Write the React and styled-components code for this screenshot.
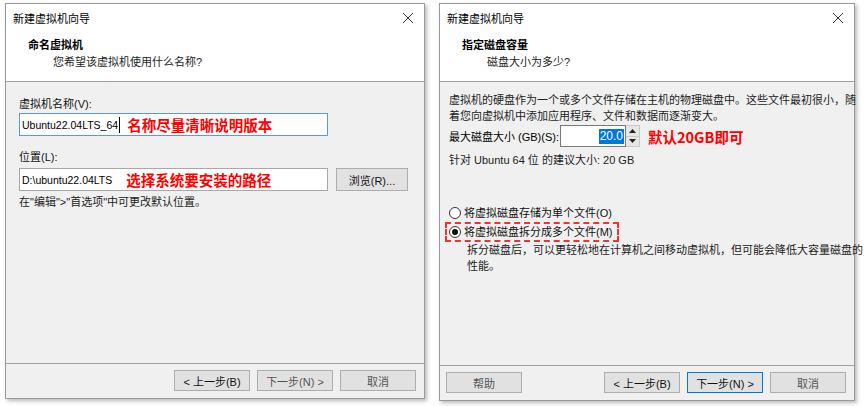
import React from "react";
import styled, { createGlobalStyle } from "styled-components";

const GlobalStyle = createGlobalStyle`
  body {
    margin: 0;
    background: #ffffff;
    font-family: "Liberation Sans", "Noto Sans CJK SC", sans-serif;
    font-size: 11px;
    color: #000;
  }
`;

// Layout
const Page = styled.div`
  display: flex;
  align-items: flex-start;
  gap: 14px;
  padding: 3px 0 0 5px;
  width: 864px;
  height: 406px;
  box-sizing: border-box;
`;

const Dialog = styled.div`
  width: ${(p) => p.$w}px;
  height: ${(p) => p.$h}px;
  box-sizing: border-box;
  display: flex;
  flex-direction: column;
  background: #f0f0f0;
  border: 1px solid #9a9a9a;
  box-shadow: 2px 2px 4px rgba(0, 0, 0, 0.28);
`;

const TitleBar = styled.div`
  height: 27px;
  flex-shrink: 0;
  background: #ffffff;
  display: flex;
  align-items: center;
  justify-content: space-between;
  padding: 0 10px 0 7px;
  font-size: 11px;
  color: #000;
`;

const CloseX = styled.svg`
  width: 12px;
  height: 12px;
`;

const Header = styled.div`
  height: 51px;
  flex-shrink: 0;
  background: #ffffff;
  border-bottom: 1px solid #a0a0a0;
  box-sizing: border-box;
  padding: 6px 0 0 22px;
`;

const HeaderTitle = styled.div`
  font-weight: bold;
  font-size: 11px;
  line-height: 16px;
  color: #000;
`;

const HeaderSub = styled.div`
  font-size: 11px;
  line-height: 16px;
  margin-top: 1px;
  padding-left: 25px;
  color: #222;
`;

const Body = styled.div`
  flex: 1;
  padding: ${(p) => p.$pad};
  display: flex;
  flex-direction: column;
`;

const Footer = styled.div`
  flex-shrink: 0;
  height: 35px;
  border-top: 1px solid #a0a0a0;
  box-sizing: border-box;
  display: flex;
  align-items: center;
  padding: 0 8px 1px 6px;
  gap: 7px;
`;

const Spacer = styled.div`
  flex: 1;
`;

const Button = styled.div`
  width: ${(p) => p.$w || 75}px;
  height: ${(p) => p.$h || 21}px;
  box-sizing: border-box;
  background: #e1e1e1;
  border: 1px solid ${(p) => (p.$focus ? "#0078d7" : "#adadad")};
  display: flex;
  align-items: center;
  justify-content: center;
  font-size: 11px;
  color: ${(p) => (p.$muted ? "#555" : "#111")};
  white-space: nowrap;
`;

const Label = styled.div`
  font-size: 11px;
  line-height: 14px;
  color: #111;
  margin-top: ${(p) => p.$mt || 0}px;
`;

const Row = styled.div`
  display: flex;
  align-items: center;
  gap: ${(p) => p.$gap || 0}px;
  margin-top: ${(p) => p.$mt || 0}px;
  white-space: nowrap;
`;

const TextBox = styled.div`
  width: 309px;
  height: 23px;
  box-sizing: border-box;
  background: #ffffff;
  border: 1px solid ${(p) => (p.$active ? "#5b9bd5" : "#a8a8a8")};
  display: flex;
  align-items: center;
  padding-left: 2px;
  font-size: 10.5px;
  color: #000;
  white-space: nowrap;
`;

const Caret = styled.span`
  width: 1px;
  height: 16px;
  background: #000;
  margin-left: 1px;
`;

const Note = styled.span`
  color: #ff0000;
  font-weight: bold;
  font-size: 14.5px;
  margin-left: ${(p) => p.$ml || 0}px;
  font-family: "Noto Sans CJK SC", sans-serif;
`;

const Para = styled.div`
  font-size: 11px;
  line-height: 16px;
  color: #222;
  white-space: nowrap;
  margin-top: ${(p) => p.$mt || 0}px;
  padding-left: ${(p) => p.$pl || 0}px;
`;

const SpinWrap = styled.div`
  display: flex;
  align-items: stretch;
  height: 22px;
`;

const SpinInput = styled.div`
  width: 66px;
  box-sizing: border-box;
  border: 1px solid #7a7a7a;
  background: #fff;
  display: flex;
  align-items: center;
  justify-content: flex-end;
  padding-right: 1px;
`;

const Selected = styled.span`
  background: #0078d7;
  color: #fff;
  font-size: 12px;
  line-height: 15px;
  padding: 0 1px;
`;

const SpinBtns = styled.div`
  width: 14px;
  display: flex;
  flex-direction: column;
  background: #e6e6e6;
  border: 1px solid #c8c8c8;
  border-left: none;
  box-sizing: border-box;
`;

const SpinBtn = styled.div`
  flex: 1;
  display: flex;
  align-items: center;
  justify-content: center;
  border-top: ${(p) => (p.$bottom ? "1px solid #c8c8c8" : "none")};
`;

const Radio = styled.span`
  width: 12px;
  height: 12px;
  border-radius: 50%;
  border: 1px solid #333;
  background: #fff;
  box-sizing: border-box;
  display: flex;
  align-items: center;
  justify-content: center;
  &::after {
    content: "";
    width: 6px;
    height: 6px;
    border-radius: 50%;
    background: ${(p) => (p.$checked ? "#111" : "transparent")};
  }
`;

const RadioRow = styled.div`
  display: flex;
  align-items: center;
  gap: 3px;
  font-size: 11px;
  line-height: 14px;
  color: #111;
  white-space: nowrap;
  margin-top: ${(p) => p.$mt || 0}px;
  width: fit-content;
  padding: 1px 4px 1px 2px;
  border-style: dashed;
  border-color: ${(p) => (p.$marked ? "#ee3333" : "transparent")};
  border-width: ${(p) => (p.$marked ? "2px" : "1px")};
  margin-left: ${(p) => (p.$marked ? -4 : -3)}px;
`;

function Close() {
  return (
    <CloseX viewBox="0 0 12 12">
      <path d="M1 1 L11 11 M11 1 L1 11" stroke="#333" strokeWidth="1" fill="none" />
    </CloseX>
  );
}

function Arrow({ up }) {
  return (
    <svg width="7" height="4" viewBox="0 0 7 4">
      <path d={up ? "M0 4 L3.5 0 L7 4 Z" : "M0 0 L3.5 4 L7 0 Z"} fill="#222" />
    </svg>
  );
}

function NameDialog() {
  return (
    <Dialog $w={420} $h={396}>
      <TitleBar>
        <span>新建虚拟机向导</span>
        <Close />
      </TitleBar>
      <Header>
        <HeaderTitle>命名虚拟机</HeaderTitle>
        <HeaderSub>您希望该虚拟机使用什么名称?</HeaderSub>
      </Header>
      <Body $pad="15px 14px 0 13px">
        <Label>虚拟机名称(V):</Label>
        <Row $mt={2}>
          <TextBox $active>
            Ubuntu22.04LTS_64
            <Caret />
            <Note $ml={7}>名称尽量清晰说明版本</Note>
          </TextBox>
        </Row>
        <Label $mt={14}>位置(L):</Label>
        <Row $mt={4} $gap={8}>
          <TextBox>
            D:\ubuntu22.04LTS
            <Note $ml={14}>选择系统要安装的路径</Note>
          </TextBox>
          <Button $w={72} $h={23}>浏览(R)...</Button>
        </Row>
        <Para $mt={3}>在"编辑"&gt;"首选项"中可更改默认位置。</Para>
      </Body>
      <Footer>
        <Spacer />
        <Button $w={76}>&lt; 上一步(B)</Button>
        <Button $w={76} $muted>下一步(N) &gt;</Button>
        <Button $w={76} $muted>取消</Button>
      </Footer>
    </Dialog>
  );
}

function DiskDialog() {
  return (
    <Dialog $w={416} $h={398}>
      <TitleBar>
        <span>新建虚拟机向导</span>
        <Close />
      </TitleBar>
      <Header>
        <HeaderTitle>指定磁盘容量</HeaderTitle>
        <HeaderSub>磁盘大小为多少?</HeaderSub>
      </Header>
      <Body $pad="10px 10px 0 9px">
        <Para>
          虚拟机的硬盘作为一个或多个文件存储在主机的物理磁盘中。这些文件最初很小，随
          <br />
          着您向虚拟机中添加应用程序、文件和数据而逐渐变大。
        </Para>
        <Row $mt={1} $gap={1}>
          <span>最大磁盘大小 (GB)(S):</span>
          <SpinWrap>
            <SpinInput>
              <Selected>20.0</Selected>
            </SpinInput>
            <SpinBtns>
              <SpinBtn>
                <Arrow up />
              </SpinBtn>
              <SpinBtn $bottom>
                <Arrow />
              </SpinBtn>
            </SpinBtns>
          </SpinWrap>
          <Note $ml={7}>默认20GB即可</Note>
        </Row>
        <Para $mt={5}>针对 Ubuntu 64 位 的建议大小: 20 GB</Para>
        <RadioRow $mt={36}>
          <Radio />
          将虚拟磁盘存储为单个文件(O)
        </RadioRow>
        <RadioRow $marked>
          <Radio $checked />
          将虚拟磁盘拆分成多个文件(M)
        </RadioRow>
        <Para $pl={18}>
          拆分磁盘后，可以更轻松地在计算机之间移动虚拟机，但可能会降低大容量磁盘的
          <br />
          性能。
        </Para>
      </Body>
      <Footer>
        <Button $w={76} $muted>帮助</Button>
        <Spacer />
        <Button $w={76}>&lt; 上一步(B)</Button>
        <Button $w={76} $focus>下一步(N) &gt;</Button>
        <Button $w={76} $muted>取消</Button>
      </Footer>
    </Dialog>
  );
}

export default function App() {
  return (
    <>
      <GlobalStyle />
      <Page>
        <NameDialog />
        <DiskDialog />
      </Page>
    </>
  );
}
